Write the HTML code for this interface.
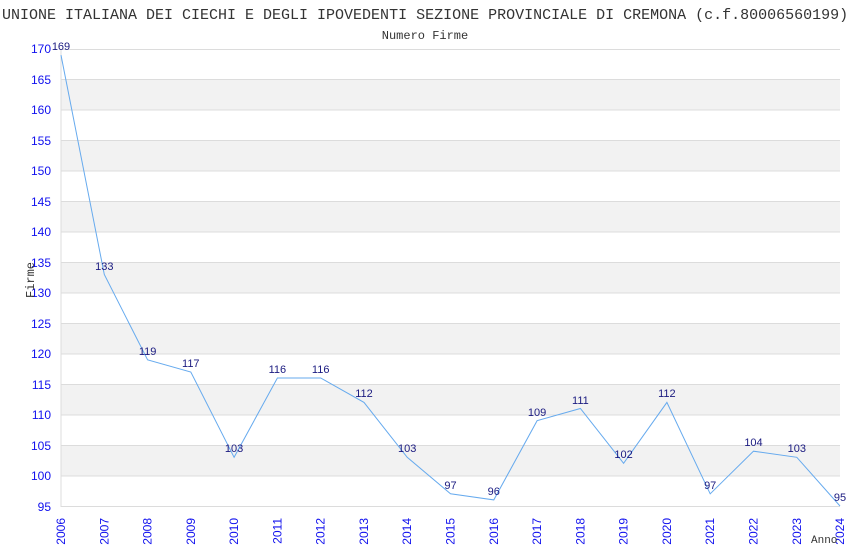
<!DOCTYPE html>
<html><head><meta charset="utf-8"><style>body{margin:0;background:#fff}svg{display:block}</style></head><body>
<svg width="850" height="550" xmlns="http://www.w3.org/2000/svg">
<rect width="850" height="550" fill="#fff"/>
<g fill="#f2f2f2">
<rect x="61" y="79.5" width="779" height="30.5"/>
<rect x="61" y="140.4" width="779" height="30.5"/>
<rect x="61" y="201.3" width="779" height="30.5"/>
<rect x="61" y="262.3" width="779" height="30.5"/>
<rect x="61" y="323.2" width="779" height="30.5"/>
<rect x="61" y="384.1" width="779" height="30.5"/>
<rect x="61" y="445.1" width="779" height="30.5"/>
</g>
<g stroke="#dcdcdc" stroke-width="1">
<line x1="61" x2="840" y1="49.5" y2="49.5"/><line x1="61" x2="840" y1="79.5" y2="79.5"/>
<line x1="61" x2="840" y1="110" y2="110"/><line x1="61" x2="840" y1="140.5" y2="140.5"/>
<line x1="61" x2="840" y1="171" y2="171"/><line x1="61" x2="840" y1="201.5" y2="201.5"/>
<line x1="61" x2="840" y1="232" y2="232"/><line x1="61" x2="840" y1="262.5" y2="262.5"/>
<line x1="61" x2="840" y1="293" y2="293"/><line x1="61" x2="840" y1="323.5" y2="323.5"/>
<line x1="61" x2="840" y1="354" y2="354"/><line x1="61" x2="840" y1="384.5" y2="384.5"/>
<line x1="61" x2="840" y1="415" y2="415"/><line x1="61" x2="840" y1="445.5" y2="445.5"/>
<line x1="61" x2="840" y1="476" y2="476"/><line x1="61" x2="840" y1="506.5" y2="506.5"/>
<line x1="61" x2="61" y1="49" y2="507"/>
</g>
<text x="2" y="19" font-family="Liberation Mono, monospace" font-size="15" fill="#333">UNIONE ITALIANA DEI CIECHI E DEGLI IPOVEDENTI SEZIONE PROVINCIALE DI CREMONA (c.f.80006560199)</text>
<text x="425" y="39" text-anchor="middle" font-family="Liberation Mono, monospace" font-size="12" fill="#333">Numero Firme</text>
<g font-family="Liberation Sans, sans-serif" font-size="12" fill="#1010ee" text-anchor="end">
<text x="51" y="53">170</text><text x="51" y="84">165</text><text x="51" y="114">160</text>
<text x="51" y="145">155</text><text x="51" y="175">150</text><text x="51" y="206">145</text>
<text x="51" y="236">140</text><text x="51" y="267">135</text><text x="51" y="297">130</text>
<text x="51" y="328">125</text><text x="51" y="358">120</text><text x="51" y="389">115</text>
<text x="51" y="419">110</text><text x="51" y="450">105</text><text x="51" y="480">100</text>
<text x="51" y="511">95</text>
</g>
<g font-family="Liberation Sans, sans-serif" font-size="12" fill="#1010ee" text-anchor="end">
<text transform="translate(65,518) rotate(-90)">2006</text>
<text transform="translate(108.3,518) rotate(-90)">2007</text>
<text transform="translate(151.6,518) rotate(-90)">2008</text>
<text transform="translate(194.8,518) rotate(-90)">2009</text>
<text transform="translate(238.1,518) rotate(-90)">2010</text>
<text transform="translate(281.4,518) rotate(-90)">2011</text>
<text transform="translate(324.7,518) rotate(-90)">2012</text>
<text transform="translate(368,518) rotate(-90)">2013</text>
<text transform="translate(411.2,518) rotate(-90)">2014</text>
<text transform="translate(454.5,518) rotate(-90)">2015</text>
<text transform="translate(497.8,518) rotate(-90)">2016</text>
<text transform="translate(541.1,518) rotate(-90)">2017</text>
<text transform="translate(584.4,518) rotate(-90)">2018</text>
<text transform="translate(627.6,518) rotate(-90)">2019</text>
<text transform="translate(670.9,518) rotate(-90)">2020</text>
<text transform="translate(714.2,518) rotate(-90)">2021</text>
<text transform="translate(757.5,518) rotate(-90)">2022</text>
<text transform="translate(800.8,518) rotate(-90)">2023</text>
<text transform="translate(844,518) rotate(-90)">2024</text>
</g>
<text transform="translate(34,298) rotate(-90)" font-family="Liberation Mono, monospace" font-size="12" fill="#333">Firme</text>
<text x="811" y="543" font-family="Liberation Mono, monospace" font-size="11" fill="#333">Anno</text>
<polyline fill="none" stroke="#66aaee" stroke-width="1" points="61,55.1 104.3,274.5 147.6,359.8 190.8,372 234.1,457.3 277.4,378 320.7,378 364,402.4 407.2,457.3 450.5,493.8 493.8,499.9 537.1,420.7 580.4,408.5 623.6,463.3 666.9,402.4 710.2,493.8 753.5,451.2 796.8,457.3 840,506"/>
<g font-family="Liberation Sans, sans-serif" font-size="11" fill="#1a1a80" text-anchor="middle">
<text x="61" y="50">169</text><text x="104.3" y="270">133</text><text x="147.6" y="355">119</text>
<text x="190.8" y="367">117</text><text x="234.1" y="452">103</text><text x="277.4" y="373">116</text>
<text x="320.7" y="373">116</text><text x="364" y="397">112</text><text x="407.2" y="452">103</text>
<text x="450.5" y="489">97</text><text x="493.8" y="495">96</text><text x="537.1" y="416">109</text>
<text x="580.4" y="404">111</text><text x="623.6" y="458">102</text><text x="666.9" y="397">112</text>
<text x="710.2" y="489">97</text><text x="753.5" y="446">104</text><text x="796.8" y="452">103</text>
<text x="840" y="501">95</text>
</g>
</svg>
</body></html>
